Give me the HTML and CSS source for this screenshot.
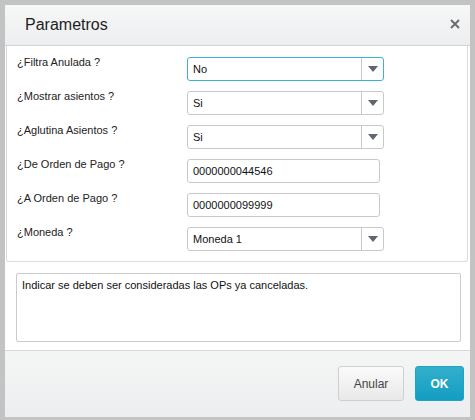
FILE: index.html
```html
<!DOCTYPE html>
<html lang="es">
<head>
    <meta charset="UTF-8">
    <meta name="viewport" content="width=device-width, initial-scale=1.0">
    <title>Parametros</title>
    <link rel="stylesheet" href="styles.css">
</head>
<body>
    <div class="dialog">
        <div class="dialog-header">
            <h2>Parametros</h2>
            <span class="close-dialog">
                <svg width="10" height="10" viewBox="0 0 10 10"><path d="M1 1 L9 9 M9 1 L1 9" stroke="#6a6d72" stroke-width="2"/></svg>
            </span>
        </div>

        <div class="params">
            <label>¿Filtra Anulada ?</label>
            <div class="combo focused"><span>No</span><i class="arrow"></i></div>

            <label>¿Mostrar asientos ?</label>
            <div class="combo"><span>Si</span><i class="arrow"></i></div>

            <label>¿Aglutina Asientos ?</label>
            <div class="combo"><span>Si</span><i class="arrow"></i></div>

            <label>¿De Orden de Pago ?</label>
            <div class="field">0000000044546</div>

            <label>¿A Orden de Pago ?</label>
            <div class="field">0000000099999</div>

            <label>¿Moneda ?</label>
            <div class="combo"><span>Moneda 1</span><i class="arrow"></i></div>
        </div>

        <div class="help-wrap">
            <div class="help">Indicar se deben ser consideradas las OPs ya canceladas.</div>
        </div>

        <div class="dialog-footer">
            <button class="btn">Anular</button>
            <button class="btn btn-primary">OK</button>
        </div>
    </div>
</body>
</html>
```

FILE: styles.css
```css
body {
    margin: 0;
    background: #c3c3c3;
    font-family: Arial, "Liberation Sans", sans-serif;
    font-size: 11px;
    color: #222;
}

.dialog {
    margin: 5px 5px 3px 5px;
    height: 412px;
    background: #fff;
    display: flex;
    flex-direction: column;
}

.dialog-header {
    height: 40px;
    display: flex;
    align-items: center;
    justify-content: space-between;
    padding: 0 10px 0 20px;
    background: linear-gradient(#f6f7f7, #eceeef);
    border-bottom: 1px solid #d2d3d4;
}

.dialog-header h2 {
    margin: 0 0 1px 0;
    font-size: 16px;
    font-weight: normal;
    color: #1e1e1e;
}

.close-dialog {
    display: flex;
    margin-bottom: 3px;
    cursor: pointer;
}

/* formulario de parametros */
.params {
    margin: 0 2px 0 1px;
    height: 203px;
    padding: 11px 0 1px 10px;
    border: 1px solid #dcdcdc;
    border-top: none;
    border-radius: 0 0 3px 3px;
    display: grid;
    grid-template-columns: 170px 197px;
    grid-auto-rows: 24px;
    row-gap: 10px;
}

.params label {
    margin-top: -2px;
    line-height: 14px;
    color: #222;
}

.combo,
.field {
    box-sizing: border-box;
    height: 24px;
    border: 1px solid #c9c9c9;
    border-radius: 3px;
    display: flex;
    align-items: center;
    color: #111;
    background: #fff;
}

.field {
    width: 193px;
    padding-left: 5px;
}

.combo span {
    flex: 1;
    padding-left: 5px;
}

.combo.focused {
    border-color: #3db2d6;
}

.combo .arrow {
    width: 21px;
    height: 100%;
    border-left: 1px solid #c9c9c9;
    display: flex;
    align-items: center;
    justify-content: center;
}

.combo .arrow::after {
    content: '';
    border-left: 5px solid transparent;
    border-right: 5px solid transparent;
    border-top: 6px solid #5f6670;
}

.help-wrap {
    padding: 11px 9px 8px 11px;
}

.help {
    box-sizing: border-box;
    height: 69px;
    border: 1px solid #cbcbcb;
    border-radius: 2px;
    padding: 5px 5px;
    color: #111;
}

.dialog-footer {
    flex: 1;
    border-top: 1px solid #d6d6d6;
    background: linear-gradient(#f4f5f5, #eceeef);
    display: flex;
    justify-content: flex-end;
    align-items: flex-start;
    gap: 11px;
    padding: 15px 6px 0 0;
}

.btn {
    height: 35px;
    width: 66px;
    font-family: Arial, "Liberation Sans", sans-serif;
    font-size: 12px;
    color: #444;
    border: 1px solid #cfcfcf;
    border-radius: 3px;
    background: linear-gradient(#fafafa, #e9e9e9);
    cursor: pointer;
}

.btn-primary {
    width: 49px;
    color: #fff;
    font-weight: bold;
    border-color: #1ea3c4;
    background: linear-gradient(#34afcd, #129dc1);
}
```
